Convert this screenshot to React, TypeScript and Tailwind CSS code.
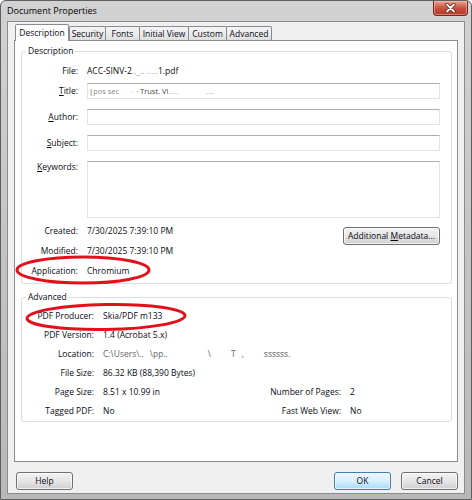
import clsx from 'clsx'
import type { ReactNode } from 'react'

const tabs = [
  { name: 'Description', w: 'w-[54px]' },
  { name: 'Security', w: 'w-[37px]' },
  { name: 'Fonts', w: 'w-[35px]' },
  { name: 'Initial View', w: 'w-[50px]' },
  { name: 'Custom', w: 'w-[39px]' },
  { name: 'Advanced', w: 'w-[46px]' },
]

function Key({ k, rest }: { k: string; rest: string }) {
  return (
    <>
      <span className="underline underline-offset-1">{k}</span>
      {rest}
    </>
  )
}

function Field({ label, children, h = 'h-[16px]', top }: { label: ReactNode; children: ReactNode; h?: string; top?: boolean }) {
  return (
    <div className={clsx('flex', top ? 'items-start' : 'items-center')}>
      <div className={clsx('w-[56px] shrink-0 text-right', top && 'pt-[1px]')}>{label}</div>
      <div className={clsx('ml-[9px] flex-1 border border-[#e2e3ea] border-t-[#abadb3] bg-white', h)}>{children}</div>
    </div>
  )
}

function Info({ label, value }: { label: string; value: ReactNode }) {
  return (
    <div className="flex h-[20px] items-center">
      <div className="w-[56px] shrink-0 text-right">{label}</div>
      <div className="ml-[9px]">{value}</div>
    </div>
  )
}

function Adv({ label, value, label2, value2 }: { label: string; value: ReactNode; label2?: string; value2?: string }) {
  return (
    <div className="flex h-[19px] items-center">
      <div className="w-[72px] shrink-0 text-right">{label}</div>
      <div className="ml-[9px] w-[150px] shrink-0 whitespace-nowrap">{value}</div>
      {label2 && (
        <>
          <div className="w-[88px] shrink-0 text-right">{label2}</div>
          <div className="ml-[9px]">{value2}</div>
        </>
      )}
    </div>
  )
}

function WinButton({ children, primary, className }: { children: ReactNode; primary?: boolean; className?: string }) {
  return (
    <button
      className={clsx(
        'flex h-[18px] items-center justify-center whitespace-nowrap rounded-[3px] border shadow-[inset_0_0_0_1px_rgba(255,255,255,0.7)]',
        primary
          ? 'border-[#3c7fb1] bg-gradient-to-b from-[#eaf6fd] via-[#d9f0fc] to-[#a7d9f5]'
          : 'border-[#707070] bg-gradient-to-b from-[#f2f2f2] via-[#e6e6e6] to-[#cfcfcf]',
        className,
      )}
    >
      {children}
    </button>
  )
}

export default function App() {
  return (
    <div className="relative flex h-[500px] w-[472px] flex-col overflow-hidden rounded-t-[6px] border border-[#5f5f5f] bg-gradient-to-b from-[#d2d2d2] via-[#c4c4c4] to-[#b8b8b8] font-['Open_Sans',sans-serif] text-[8.5px] leading-[10px] text-[#0a0a14]">
      {/* title bar */}
      <div className="flex h-[20px] shrink-0 items-center justify-between pl-[6px]">
        <span className="text-[9px] text-black">Document Properties</span>
        <div className="mr-[3px] flex h-[15px] w-[35px] items-center justify-center self-start rounded-b-[4px] border border-t-0 border-[#6b2a20] bg-gradient-to-b from-[#e8a493] via-[#c9513f] to-[#b6392a] shadow-[inset_0_0_0_1px_rgba(255,200,190,0.5)]">
          <svg width="11" height="10" viewBox="0 0 11 10">
            <path d="M2 1.5 L9 8.5 M9 1.5 L2 8.5" stroke="#5a1d14" strokeWidth="3.4" strokeLinecap="round" />
            <path d="M2 1.5 L9 8.5 M9 1.5 L2 8.5" stroke="#ffffff" strokeWidth="1.8" strokeLinecap="round" />
          </svg>
        </div>
      </div>

      {/* client area */}
      <div className="mx-[6px] mb-[5px] flex flex-1 flex-col border border-[#8b8b8b] bg-[#f0f0f0] pl-[6px] pr-[6px] pt-[2px]">
        {/* tabs */}
        <div className="relative z-10 -mb-px flex h-[17px] items-end pl-[1px]">
          {tabs.map((t, i) => (
            <div
              key={t.name}
              className={clsx(
                'flex shrink-0 items-center justify-center rounded-t-[2px] border border-b-0 border-[#898c95] whitespace-nowrap',
                t.w,
                i === 0
                  ? 'h-[17px] bg-white pb-[1px]'
                  : 'mb-px h-[14px] bg-gradient-to-b from-[#f4f4f4] via-[#ececec] to-[#dedede]',
                i > 1 && '-ml-px',
              )}
            >
              {t.name}
            </div>
          ))}
        </div>

        {/* panel */}
        <div className="flex flex-1 flex-col border border-[#898c95] bg-white pl-[6px] pr-[5px]">
          <fieldset className="mt-[5px] rounded-[3px] border border-[#d5dfe5] pb-[2px] pr-[11px]">
            <legend className="ml-[4px] px-[2px] leading-[10px]">Description</legend>
            <div className="mt-[8px] flex h-[14px] items-center">
              <div className="w-[56px] shrink-0 text-right">File:</div>
              <div className="ml-[9px] whitespace-nowrap">
                ACC-SINV-2<span className="text-[#999]">.._.. </span>
                <span className="text-[#aaa]">.....</span>1.pdf
              </div>
            </div>
            <div className="mt-[5px] flex flex-col gap-[10px]">
              <Field label={<Key k="T" rest="itle:" />}>
                <div className="flex h-full items-center overflow-hidden whitespace-nowrap pl-[1px] text-[7.5px] text-[#444]">
                  <span>|</span>
                  <span className="text-[#888]">pos sec</span>
                  <span className="ml-[12px] text-[#999]">·</span>
                  <span className="ml-[3px]">· Trust. Vl</span>
                  <span className="text-[#aaa]">.....</span>
                  <span className="ml-[28px] text-[#aaa]">....</span>
                </div>
              </Field>
              <Field label={<Key k="A" rest="uthor:" />}>
                <span />
              </Field>
              <Field label={<Key k="S" rest="ubject:" />}>
                <span />
              </Field>
              <Field label={<Key k="K" rest="eywords:" />} h="h-[57px]" top>
                <span />
              </Field>
            </div>
            <div className="mt-[3px] flex items-start justify-between">
              <div className="flex flex-col">
                <Info label="Created:" value="7/30/2025 7:39:10 PM" />
                <Info label="Modified:" value="7/30/2025 7:39:10 PM" />
                <Info label="Application:" value="Chromium" />
              </div>
              <WinButton className="mt-[6px] w-[97px]">
                Additional{'\u00a0'}<Key k="M" rest="etadata..." />
              </WinButton>
            </div>
          </fieldset>

          <fieldset className="mt-[8px] rounded-[3px] border border-[#d5dfe5] pb-[1px]">
            <legend className="ml-[4px] px-[2px] leading-[10px]">Advanced</legend>
            <div className="mt-[4px] flex flex-col">
              <Adv label="PDF Producer:" value="Skia/PDF m133" />
              <Adv label="PDF Version:" value="1.4 (Acrobat 5.x)" />
              <Adv
                label="Location:"
                value={
                  <span className="text-[#666]">
                    C:\Users\..<span className="ml-[6px]">\pp..</span>
                    <span className="ml-[40px]">\</span>
                    <span className="ml-[20px]">T</span>
                    <span className="ml-[6px]">,</span>
                    <span className="ml-[20px] text-[#555]">ssssss.</span>
                  </span>
                }
              />
              <Adv label="File Size:" value="86.32 KB (88,390 Bytes)" />
              <Adv label="Page Size:" value="8.51 x 10.99 in" label2="Number of Pages:" value2="2" />
              <Adv label="Tagged PDF:" value="No" label2="Fast Web View:" value2="No" />
            </div>
          </fieldset>
        </div>

        {/* buttons */}
        <div className="flex h-[31px] shrink-0 items-start pt-[10px]">
          <WinButton className="ml-[2px] w-[57px]">Help</WinButton>
          <div className="flex-1" />
          <WinButton primary className="w-[57px]">OK</WinButton>
          <WinButton className="ml-[10px] w-[57px]">Cancel</WinButton>
        </div>
      </div>

      {/* red annotation ellipses */}
      <svg className="pointer-events-none absolute left-0 top-0" width="472" height="500">
        <ellipse cx="82" cy="269" rx="66" ry="13" fill="none" stroke="#e3101b" strokeWidth="3" />
        <ellipse cx="105" cy="316" rx="79" ry="12.5" fill="none" stroke="#e3101b" strokeWidth="3" transform="rotate(-1 105 316)" />
      </svg>
    </div>
  )
}
